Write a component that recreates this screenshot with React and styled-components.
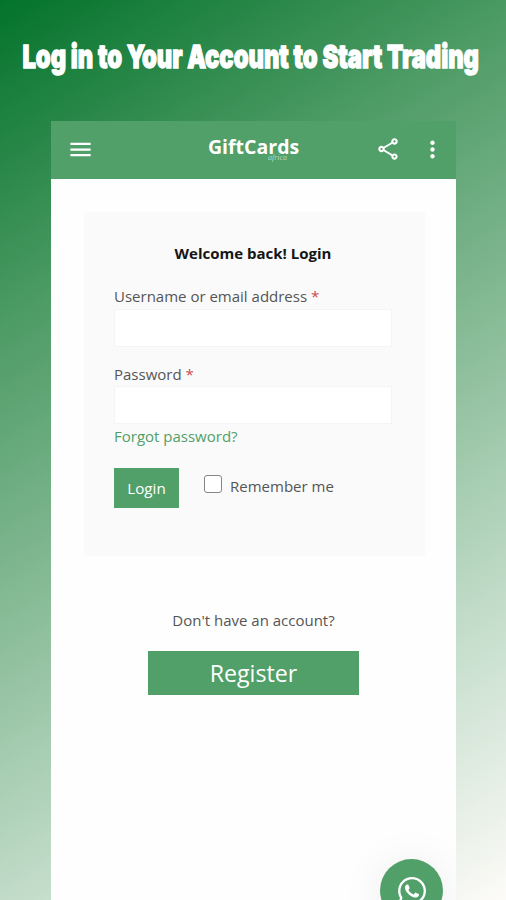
import React from 'react';
import styled, { createGlobalStyle } from 'styled-components';
import { MdMenu, MdMoreVert, MdOutlineShare } from 'react-icons/md';
import { FaWhatsapp } from 'react-icons/fa';

const GlobalStyle = createGlobalStyle`
	* {
		box-sizing: border-box;
	}
	body {
		margin: 0;
		overflow: hidden;
		font-family: 'Open Sans', 'Noto Sans', sans-serif;
	}
`;

const Page = styled.div`
	display: flex;
	flex-direction: column;
	width: 506px;
	height: 900px;
	overflow: hidden;
	background: linear-gradient(
		148.5deg,
		#03732b 0%,
		#4d9b65 27%,
		#82b892 49%,
		#c2dcc9 75%,
		#fdfbf8 100%
	);
`;

const Headline = styled.h1`
	display: flex;
	justify-content: center;
	align-items: center;
	flex: none;
	height: 121px;
	margin: 0;
	padding: 0 4px 8px 0;
	font-family: Inter, sans-serif;
	font-size: 32px;
	font-weight: 900;
	color: #fff;
	white-space: nowrap;
`;

const Condensed = styled.span`
	-webkit-text-stroke: 1.3px #fff;
	transform: scaleX(0.742);
`;

const Phone = styled.main`
	position: relative;
	flex: 1;
	width: 405px;
	margin-left: 51px;
	overflow: hidden;
	background: #fefefe;
`;

const TopBar = styled.header`
	display: flex;
	align-items: center;
	height: 58px;
	padding: 0 10px 2px 16px;
	background: #51a069;
	color: #fff;
`;

const IconButton = styled.button`
	display: flex;
	margin: 0 0 0 ${({ $gap }) => $gap || 0}px;
	padding: 0;
	border: 0;
	background: none;
	color: inherit;
`;

const Logo = styled.div`
	display: flex;
	flex-direction: column;
	flex: 1;
	padding: 0 0 2px 114px;
	font-size: 19.5px;
	font-weight: 700;
	line-height: 22px;
`;

const LogoSub = styled.span`
	height: 6px;
	margin: -4px 0 0 60px;
	font-family: 'Liberation Serif', serif;
	font-size: 8px;
	font-style: italic;
	font-weight: 400;
	line-height: 8px;
	color: #b5d8c0;
`;

const Card = styled.form`
	display: flex;
	flex-direction: column;
	width: 341px;
	height: 344px;
	margin: 33px 0 0 33px;
	padding: 29px 33px 0 30px;
	background: #fafafa;
`;

const CardTitle = styled.h2`
	margin: 0 0 20px;
	font-size: 15px;
	line-height: 24px;
	text-align: center;
	color: #151515;
`;

const Field = styled.label`
	display: flex;
	flex-direction: column;
	gap: ${({ $last }) => ($last ? 1 : 2)}px;
	margin-bottom: ${({ $last }) => ($last ? 1 : 16)}px;
	font-size: 15px;
	line-height: 22px;
	color: #555;
`;

const Required = styled.span`
	color: #d04a4a;
`;

const Input = styled.input`
	width: 278px;
	height: 38px;
	padding: 0 10px;
	border: 1px solid #f4f4f4;
	background: #fff;
	font: inherit;
	outline: none;
`;

const Forgot = styled.a`
	font-size: 15px;
	line-height: 23px;
	color: #51a069;
`;

const Actions = styled.div`
	display: flex;
	align-items: center;
	margin-top: 20px;
`;

const LoginButton = styled.button`
	width: 65px;
	height: 40px;
	padding: 0 0 1px;
	border: 0;
	background: #51a069;
	font-family: inherit;
	font-size: 15.2px;
	color: #fff;
`;

const Remember = styled.label`
	display: flex;
	align-items: center;
	margin: -5px 0 0 25px;
	font-size: 15px;
	color: #555;
`;

const Checkbox = styled.input`
	appearance: none;
	width: 18px;
	height: 18px;
	margin: -3px 8px 0 0;
	border: 1px solid #858585;
	border-radius: 3px;
	background: #fff;
`;

const SignUp = styled.section`
	display: flex;
	flex-direction: column;
	align-items: center;
	padding-top: 52px;
	font-size: 15px;
	line-height: 24px;
	color: #555;
`;

const RegisterButton = styled.button`
	width: 211px;
	height: 44px;
	margin-top: 19px;
	padding: 0;
	border: 0;
	background: #51a069;
	font-family: inherit;
	font-size: 23.2px;
	color: #fff;
`;

const ChatBubble = styled.a`
	position: absolute;
	top: 738px;
	left: 329px;
	display: flex;
	align-items: center;
	justify-content: center;
	width: 63px;
	height: 63px;
	border-radius: 50%;
	background: #51a069;
	box-shadow: 0 4px 44px rgba(0, 0, 0, 0.08);
	color: #fff;
`;

const App = () => {
	return (
		<Page>
			<GlobalStyle />
			<Headline>
				<Condensed>Log in to Your Account to Start Trading</Condensed>
			</Headline>
			<Phone>
				<TopBar>
					<IconButton type='button' aria-label='Menu'>
						<MdMenu size={27} />
					</IconButton>
					<Logo>
						GiftCards
						<LogoSub>africa</LogoSub>
					</Logo>
					<IconButton type='button' aria-label='Share'>
						<MdOutlineShare size={26} />
					</IconButton>
					<IconButton type='button' aria-label='More' $gap={18}>
						<MdMoreVert size={27} />
					</IconButton>
				</TopBar>
				<Card>
					<CardTitle>Welcome back! Login</CardTitle>
					<Field>
						<span>
							Username or email address <Required>*</Required>
						</span>
						<Input type='text' />
					</Field>
					<Field $last>
						<span>
							Password <Required>*</Required>
						</span>
						<Input type='password' />
					</Field>
					<Forgot>Forgot password?</Forgot>
					<Actions>
						<LoginButton type='button'>Login</LoginButton>
						<Remember>
							<Checkbox type='checkbox' />
							Remember me
						</Remember>
					</Actions>
				</Card>
				<SignUp>
					<div>Don't have an account?</div>
					<RegisterButton type='button'>Register</RegisterButton>
				</SignUp>
				<ChatBubble aria-label='WhatsApp'>
					<FaWhatsapp size={32} />
				</ChatBubble>
			</Phone>
		</Page>
	);
};

export default App;
